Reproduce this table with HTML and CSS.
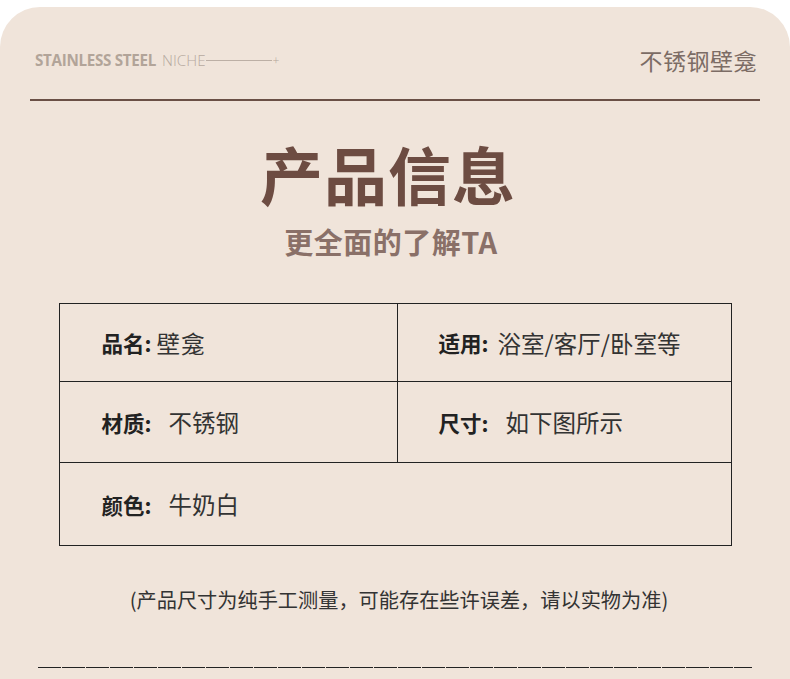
FILE: index.html
```html
<!DOCTYPE html>
<html lang="zh-CN">
<head>
<meta charset="utf-8">
<link rel="stylesheet" href="styles.css">
</head>
<body>
<div class="card">
  <header class="head">
    <div class="brand">
      <span class="brand-bold">STAINLESS STEEL</span>
      <span class="brand-light">NICHE</span>
      <span class="brand-line"></span>
      <span class="brand-plus">+</span>
    </div>
    <div class="head-title">不锈钢壁龛</div>
  </header>
  <div class="divider"></div>
  <h1 class="title">产品信息</h1>
  <p class="subtitle">更全面的了解TA</p>
  <div class="spec">
    <div class="cell r1 c1"><b class="k">品名:</b><span class="v tight">壁龛</span></div>
    <div class="cell r1 c2"><b class="k">适用:</b><span class="v tight2">浴室/客厅/卧室等</span></div>
    <div class="cell r2 c1"><b class="k">材质:</b><span class="v wide">不锈钢</span></div>
    <div class="cell r2 c2"><b class="k">尺寸:</b><span class="v wide">如下图所示</span></div>
    <div class="cell r3 full"><b class="k">颜色:</b><span class="v wide">牛奶白</span></div>
  </div>
  <p class="note">(产品尺寸为纯手工测量，可能存在些许误差，请以实物为准)</p>
  <div class="dash"></div>
</div>
</body>
</html>
```
FILE: styles.css
```css
* { box-sizing: border-box; }
html, body { margin: 0; padding: 0; background: #ffffff; }
body { font-family: "Noto Sans CJK SC", "Noto Sans", sans-serif; }

.card {
  margin-top: 7px;
  height: 672px;
  background: #f0e4da;
  border-radius: 40px 40px 0 0;
  overflow: hidden;
  padding-top: 34px;
}

.head {
  height: 38px;
  display: flex;
  align-items: center;
  justify-content: space-between;
  padding: 0 33px 0 35px;
}
.brand {
  display: flex;
  align-items: center;
  font-family: "Open Sans", "Liberation Sans", sans-serif;
  font-size: 15.2px;
  color: #b2a499;
}
.brand-bold { font-weight: 700; letter-spacing: -0.3px; }
.brand-light { font-weight: 300; margin-left: 6px; color: #b6a99f; }
.brand-line { display: inline-block; width: 66px; height: 1px; background: #bcafa5; }
.brand-plus { font-size: 12px; font-weight: 300; margin-left: 1px; }
.head-title {
  font-size: 23px;
  color: #7c6c65;
  letter-spacing: 0.5px;
}

.divider {
  margin: 20px 30px 0;
  height: 2px;
  background: #6a4f45;
}

.title {
  margin: 35px 0 0;
  padding-right: 14px;
  text-align: center;
  font-size: 63px;
  line-height: 74px;
  font-weight: 700;
  color: #6d4c42;
  letter-spacing: 1px;
}
.subtitle {
  margin: 14px 0 0;
  padding-right: 8px;
  text-align: center;
  font-size: 29px;
  line-height: 34px;
  font-weight: 700;
  color: #8a7068;
  letter-spacing: 0.5px;
}

.spec {
  margin: 45px auto 0;
  width: 673px;
  display: grid;
  grid-template-columns: 338px 1fr;
  grid-template-rows: 78px 81px 82px;
  border: 1px solid #222;
}
.cell {
  display: flex;
  align-items: center;
  white-space: pre;
}
.k { font-size: 21.5px; font-weight: 700; color: #222; }
.v { font-size: 23.5px; font-weight: 400; color: #333; }
.tight { margin-left: 5px; letter-spacing: 1px; }
.tight2 { margin-left: 9px; }
.wide { margin-left: 17px; }
.c1 { padding-left: 42px; border-right: 1px solid #222; }
.c2 { padding-left: 41px; }
.r1, .r2 { border-bottom: 1px solid #222; }
.full { grid-column: 1 / 3; padding-left: 42px; }

.note {
  margin: 40px 0 0;
  padding-left: 8px;
  text-align: center;
  font-size: 20.2px;
  line-height: 28px;
  color: #333;
}

.dash {
  margin: 53px 38px 0;
  height: 1px;
  background: repeating-linear-gradient(90deg, #222 0 23px, transparent 23px 24px);
}
```
